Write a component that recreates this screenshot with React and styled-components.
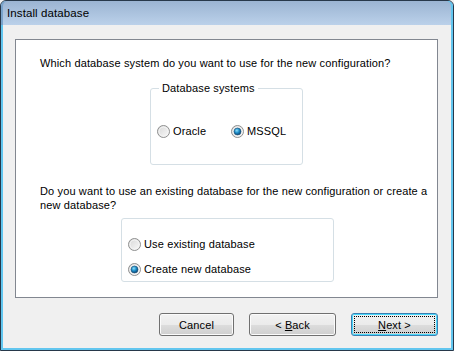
import React from "react";
import styled, { createGlobalStyle } from "styled-components";

const Global = createGlobalStyle`
  html, body { margin: 0; padding: 0; background: #f0f0f0; }
  body { font-family: "Liberation Sans", Arial, sans-serif; font-size: 11px; color: #000; letter-spacing: 0.13px; }
  * { box-sizing: border-box; }
`;

const Frame = styled.div`
  width: 454px;
  height: 351px;
  display: flex;
  flex-direction: column;
  border: 1px solid #27384a;
  border-radius: 6px 6px 0 0;
  box-shadow: inset 0 0 0 2px #62c6ef;
  padding: 0 2px 2px 2px;
  overflow: hidden;
  background: #b7cde6;
`;

const TitleBar = styled.div`
  height: 24px;
  flex: none;
  margin: 0 -2px;
  padding: 0 6px;
  display: flex;
  align-items: center;
  background: linear-gradient(#9bb4d2, #bbd1ea);
  border-radius: 5px 5px 0 0;
  box-shadow: inset -2px 0 0 #62c6ef, inset 2px 0 0 #7aa4cc;
  font-size: 11.5px;
  letter-spacing: 0.1px;
  color: #000;
`;

const Client = styled.div`
  flex: 1;
  display: flex;
  flex-direction: column;
  background: #f0f0f0;
  padding: 14px 13px 12px 12px;
`;

const Panel = styled.div`
  flex: 1;
  background: #fff;
  border: 1px solid #828790;
  display: flex;
  flex-direction: column;
  align-items: stretch;
`;

const Prompt = styled.p`
  margin: ${p => p.$top}px 0 0 0;
  padding: 0 8px 0 24px;
  line-height: 14px;
`;

const Center = styled.div`
  display: flex;
  justify-content: center;
  margin-top: ${p => p.$top}px;
  padding-left: ${p => p.$shift || 0}px;
`;

const GroupBox = styled.div`
  position: relative;
  width: ${p => p.$w}px;
  height: ${p => p.$h}px;
  border: 1px solid #d5dfe5;
  border-radius: 3px;
  padding: ${p => p.$pt}px 0 0 6px;
  display: flex;
  flex-direction: ${p => p.$dir};
  gap: ${p => p.$gap}px;
`;

const Legend = styled.span`
  position: absolute;
  top: -7px;
  left: 8px;
  padding: 0 3px;
  background: #fff;
  line-height: 13px;
`;

const RadioLabel = styled.label`
  display: flex;
  align-items: center;
  gap: 3px;
  height: 13px;
  width: ${p => (p.$w ? `${p.$w}px` : "auto")};
  line-height: 13px;
`;

const Radio = ({ checked }) => (
  <svg width="13" height="13" viewBox="0 0 13 13">
    <defs>
      <linearGradient id="rg" x1="0" y1="0" x2="1" y2="1">
        <stop offset="0" stopColor="#d6d6d6" />
        <stop offset="1" stopColor="#fbfbfb" />
      </linearGradient>
      <radialGradient id="dot" cx="0.4" cy="0.35" r="0.7">
        <stop offset="0" stopColor="#8fe0fb" />
        <stop offset="0.5" stopColor="#1a8ac6" />
        <stop offset="1" stopColor="#0b3f6b" />
      </radialGradient>
    </defs>
    <circle cx="6.5" cy="6.5" r="6" fill="url(#rg)" stroke="#8e8f8f" strokeWidth="1" />
    <circle cx="6.5" cy="6.5" r="4.5" fill="none" stroke="#f4f4f4" strokeWidth="1" />
    {checked && <circle cx="6.5" cy="6.5" r="3.5" fill="url(#dot)" stroke="#1b4d74" strokeWidth="0.6" />}
  </svg>
);

const ButtonRow = styled.div`
  display: flex;
  justify-content: flex-end;
  gap: 15px;
  margin-top: 15px;
`;

const Button = styled.button`
  position: relative;
  width: ${p => p.$w}px;
  height: 23px;
  padding: 0;
  font-family: inherit;
  font-size: 11px;
  letter-spacing: 0.13px;
  color: #000;
  border: 1px solid ${p => (p.$default ? "#3c7fb1" : "#707070")};
  border-radius: 3px;
  background: linear-gradient(#f2f2f2 0%, #ebebeb 50%, #dddddd 51%, #cfcfcf 100%);
  box-shadow: inset 0 0 0 1px ${p => (p.$default ? "#48d8fb" : "#fbfbfb")};
  &::after {
    content: "";
    display: ${p => (p.$default ? "block" : "none")};
    position: absolute;
    inset: 2px;
    border: 1px dotted #000;
  }
`;

const U = styled.span`
  text-decoration: underline;
`;

export default function App() {
  return (
    <>
      <Global />
      <Frame>
        <TitleBar>Install database</TitleBar>
        <Client>
          <Panel>
            <Prompt $top={16}>Which database system do you want to use for the new configuration?</Prompt>
            <Center $top={18}>
              <GroupBox $w={153} $h={77} $pt={36} $dir="row" $gap={0}>
                <Legend>Database systems</Legend>
                <RadioLabel $w={74}>
                  <Radio />
                  Oracle
                </RadioLabel>
                <RadioLabel>
                  <Radio checked />
                  MSSQL
                </RadioLabel>
              </GroupBox>
            </Center>
            <Prompt $top={19}>
              Do you want to use an existing database for the new configuration or create a
              <br />
              new database?
            </Prompt>
            <Center $top={6} $shift={2}>
              <GroupBox $w={213} $h={64} $pt={19} $dir="column" $gap={12}>
                <RadioLabel>
                  <Radio />
                  Use existing database
                </RadioLabel>
                <RadioLabel>
                  <Radio checked />
                  Create new database
                </RadioLabel>
              </GroupBox>
            </Center>
          </Panel>
          <ButtonRow>
            <Button $w={75}>Cancel</Button>
            <Button $w={87}>
              &lt; <U>B</U>ack
            </Button>
            <Button $w={87} $default>
              <U>N</U>ext &gt;
            </Button>
          </ButtonRow>
        </Client>
      </Frame>
    </>
  );
}
